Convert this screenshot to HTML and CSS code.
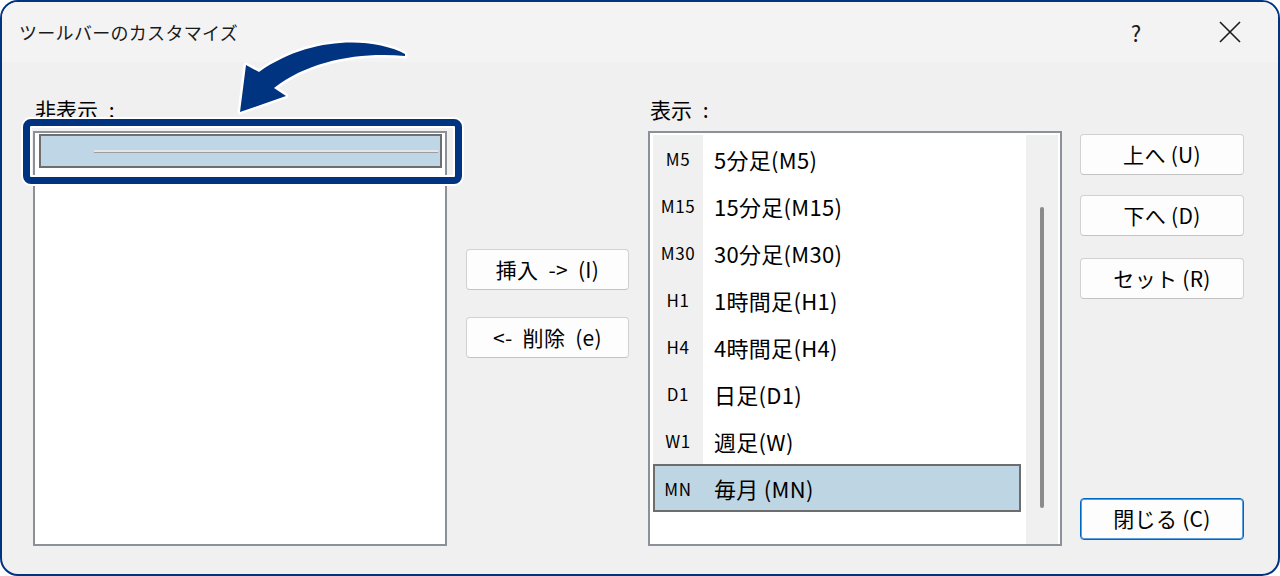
FILE: index.html
```html
<!DOCTYPE html>
<html lang="ja">
<head>
    <meta charset="UTF-8">
    <title>ツールバーのカスタマイズ</title>
    <link rel="stylesheet" href="styles.css">
</head>
<body>
    <div class="window">
        <div class="titlebar">
            <span class="title">ツールバーのカスタマイズ</span>
            <span class="help">?</span>
            <span class="close">
                <svg width="22" height="22" viewBox="0 0 22 22"><path d="M1 1 L21 21 M21 1 L1 21" stroke="#1a1a1a" stroke-width="1.6" fill="none"/></svg>
            </span>
        </div>
        <div class="content">
            <div class="pane">
                <div class="label">非表示 :</div>
                <div class="listbox">
                    <div class="sep-item"><span class="sep-line"></span></div>
                </div>
            </div>
            <div class="middle">
                <button class="btn wide">挿入 -&gt; (I)</button>
                <button class="btn wide">&lt;- 削除 (e)</button>
            </div>
            <div class="pane">
                <div class="label">表示 :</div>
                <div class="listbox shown">
                    <div class="rows">
                        <div class="row"><span class="code">M5</span><span class="name">5分足(M5)</span></div>
                        <div class="row"><span class="code">M15</span><span class="name">15分足(M15)</span></div>
                        <div class="row"><span class="code">M30</span><span class="name">30分足(M30)</span></div>
                        <div class="row"><span class="code">H1</span><span class="name">1時間足(H1)</span></div>
                        <div class="row"><span class="code">H4</span><span class="name">4時間足(H4)</span></div>
                        <div class="row"><span class="code">D1</span><span class="name">日足(D1)</span></div>
                        <div class="row"><span class="code">W1</span><span class="name">週足(W)</span></div>
                        <div class="row selected"><span class="code">MN</span><span class="name">毎月 (MN)</span></div>
                    </div>
                    <div class="scrollbar"><div class="thumb"></div></div>
                </div>
            </div>
            <div class="side">
                <button class="btn">上へ (U)</button>
                <button class="btn">下へ (D)</button>
                <button class="btn set">セット (R)</button>
                <button class="btn default">閉じる (C)</button>
            </div>
        </div>

        <!-- annotation -->
        <div class="callout"></div>
        <svg class="arrow" width="185" height="85" viewBox="230 35 185 85">
            <path d="M405,54 C372,37 310,36 259,72 L246,65 L240,112 L286,96 L274,88 C310,60 360,52 405,56 Z"
                  fill="#003380" stroke="#fff" stroke-width="5" stroke-linejoin="round" paint-order="stroke"/>
        </svg>
    </div>
</body>
</html>
```

FILE: styles.css
```css
body {
    margin: 0;
    background: #ffffff;
    font-family: "Noto Sans CJK JP", "Noto Sans", sans-serif;
    color: #000;
}
.window {
    position: relative;
    width: 1280px;
    height: 576px;
    box-sizing: border-box;
    border: 2px solid #003380;
    border-radius: 18px;
    background: #f0f0f0;
    overflow: hidden;
}
.titlebar {
    display: flex;
    align-items: center;
    height: 60px;
    background: #f3f3f3;
    padding-right: 18px;
}
.title {
    flex: 1;
    padding-left: 17px;
    font-size: 18px;
    letter-spacing: 0.3px;
    color: #1a1a1a;
}
.help {
    width: 60px;
    text-align: center;
    font-size: 22px;
    color: #1a1a1a;
    margin-right: 34px;
}
.close {
    width: 60px;
    display: flex;
    justify-content: center;
}
.content {
    display: flex;
    height: 512px;
    padding: 32px 0 0 31px;
    box-sizing: border-box;
}
.pane {
    display: flex;
    flex-direction: column;
    width: 414px;
}
.label {
    height: 30px;
    line-height: 30px;
    margin-bottom: 7px;
    font-size: 21px;
    word-spacing: 6px;
    padding-left: 2px;
}
.listbox {
    height: 415px;
    box-sizing: border-box;
    border: 2px solid #8c9099;
    background: #fff;
    padding: 1px 3px 0 4px;
}
.sep-item {
    display: flex;
    align-items: center;
    height: 34px;
    box-sizing: border-box;
    border: 2px solid #6e6e6e;
    background: #bed6e5;
}
.sep-line {
    flex: 1;
    margin: 0 2px 0 53px;
    height: 2px;
    background: #e4e6e8;
    border-bottom: 1px solid #9a9ea2;
}
.middle {
    display: flex;
    flex-direction: column;
    gap: 27px;
    width: 163px;
    margin: 0 19px;
    padding-top: 155px;
}
.btn {
    height: 41px;
    box-sizing: border-box;
    border: 1px solid #d1d1d1;
    border-bottom-color: #c3c3c3;
    border-radius: 4px;
    background: #fdfdfd;
    font-family: inherit;
    font-size: 21px;
    letter-spacing: 0.3px;
    color: #000;
    padding: 0 0 2px;
}
.btn.wide {
    word-spacing: 5px;
}
.shown {
    display: flex;
    padding: 2px 2px 0 0;
}
.rows {
    flex: 1;
    padding: 0 5px 0 3px;
}
.row {
    display: flex;
    align-items: center;
    height: 47px;
    box-sizing: border-box;
}
.code {
    width: 50px;
    align-self: stretch;
    display: flex;
    align-items: center;
    justify-content: center;
    background: #f0f0f0;
    font-size: 17px;
    letter-spacing: 0.6px;
}
.name {
    padding-left: 11px;
    font-size: 22px;
    letter-spacing: 0.3px;
}
.row.selected {
    height: 48px;
    border: 2px solid #6d6d6d;
    background: #bed5e4;
}
.row.selected .code {
    width: 46px;
    background: transparent;
}
.row.selected .name {
    padding-left: 13px;
}
.scrollbar {
    width: 32px;
    background: #f0f0f0;
}
.thumb {
    width: 4px;
    height: 301px;
    margin: 72px 0 0 14px;
    border-radius: 2px;
    background: #8a8a8a;
}
.side {
    display: flex;
    flex-direction: column;
    width: 164px;
    margin-left: 18px;
    padding: 40px 0 34px;
    box-sizing: border-box;
}
.side .btn + .btn {
    margin-top: 20px;
}
.side .btn.set {
    margin-top: 22px;
}
.side .btn.default {
    margin-top: auto;
    height: 42px;
    border: 1px solid #0067c0;
    box-shadow: inset 0 0 0 1px #5b9ddc;
}
.callout {
    position: absolute;
    left: 21px;
    top: 117px;
    width: 439px;
    height: 65px;
    box-sizing: border-box;
    border: 7px solid #003380;
    border-radius: 8px;
    box-shadow: 0 0 0 2px #fff, inset 0 0 0 2px #fff;
}
.arrow {
    position: absolute;
    left: 228px;
    top: 33px;
}
```
